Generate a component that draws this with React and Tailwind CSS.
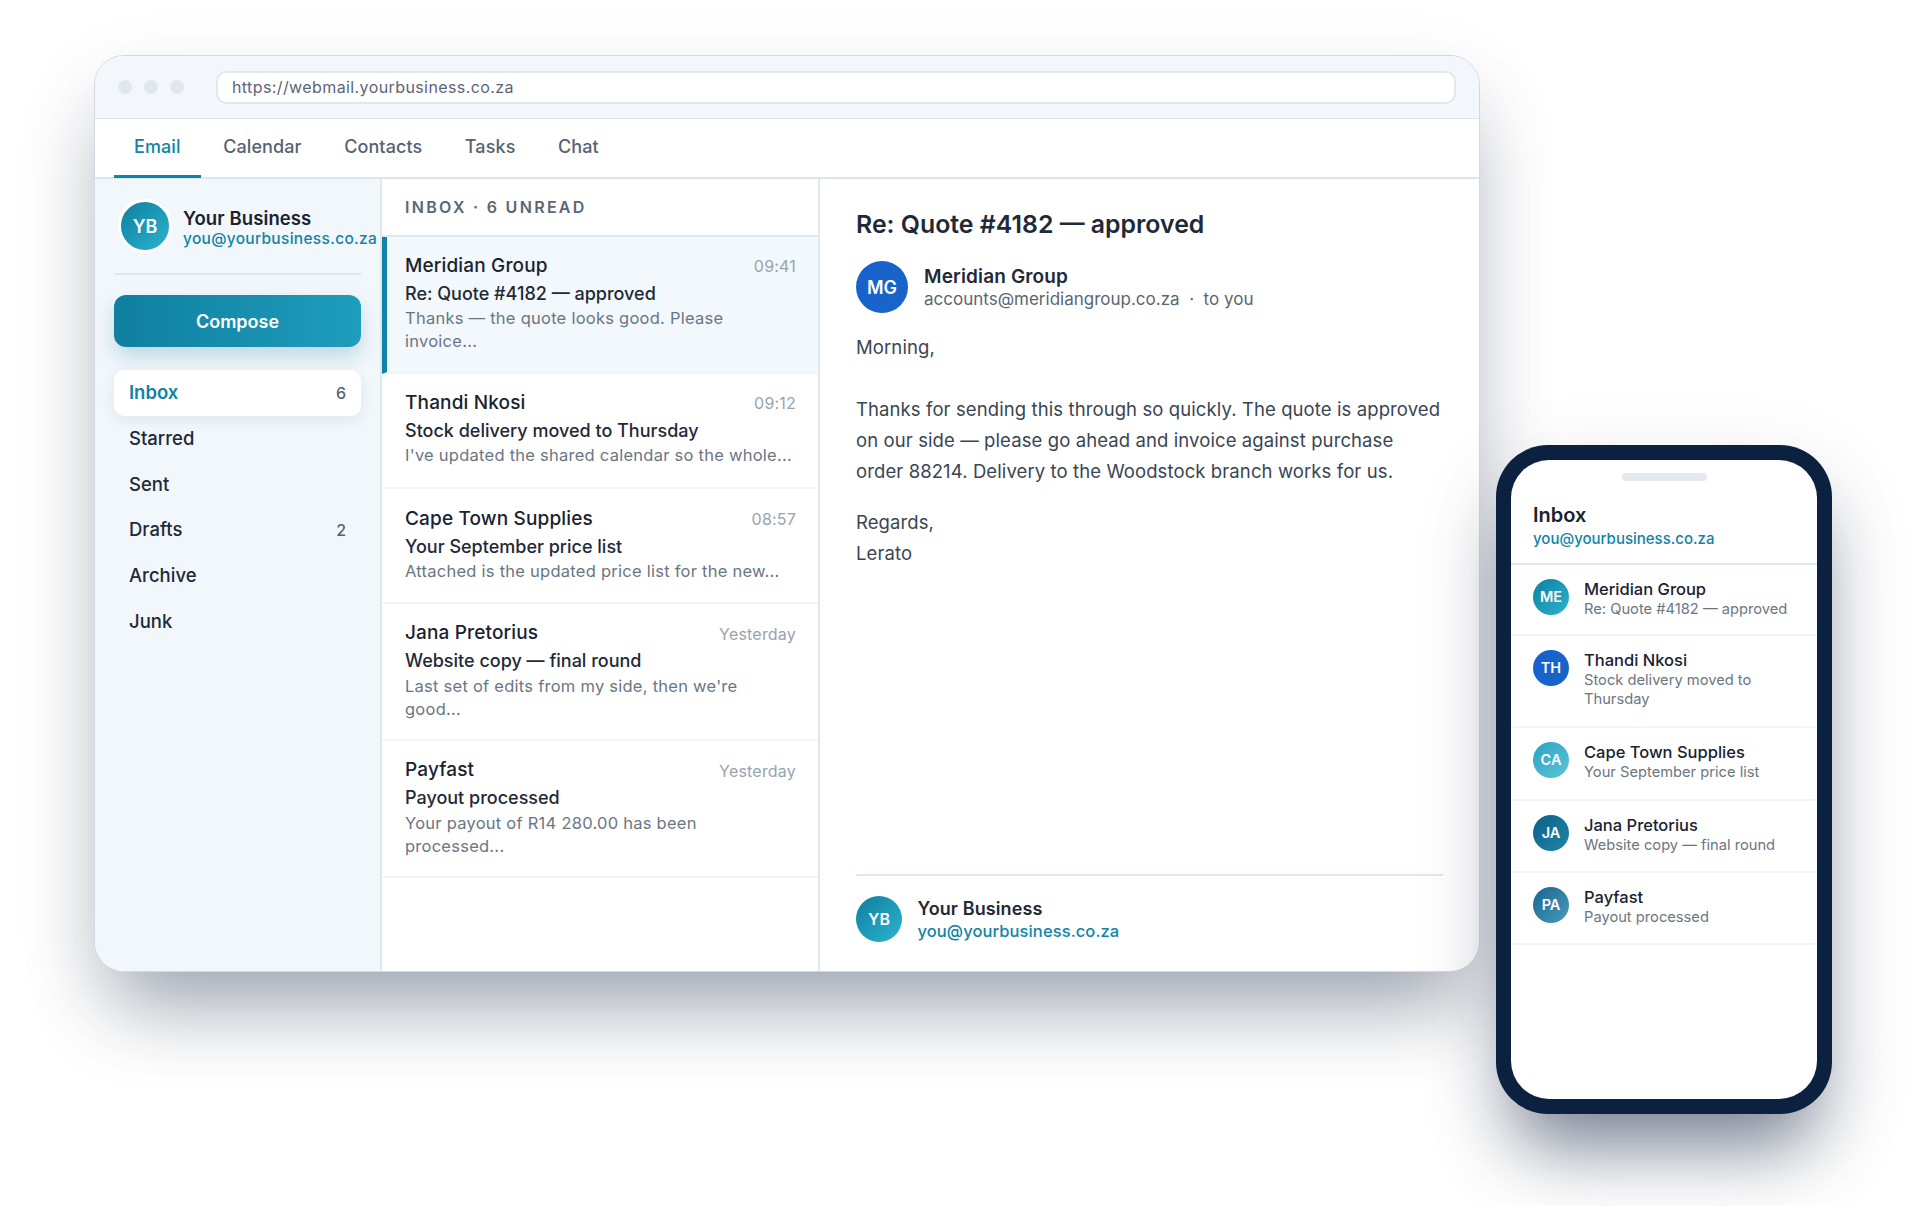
import React from "react";

const tabs = ["Email", "Calendar", "Contacts", "Tasks", "Chat"];
const nav = [["Inbox", "6"], ["Starred"], ["Sent"], ["Drafts", "2"], ["Archive"], ["Junk"]];
const mails = [
  { n: "Meridian Group", t: "09:41", s: "Re: Quote #4182 — approved", p: "Thanks — the quote looks good. Please invoice...", h: "h-[136.5px] pt-[14.5px]", active: true },
  { n: "Thandi Nkosi", t: "09:12", s: "Stock delivery moved to Thursday", p: "I've updated the shared calendar so the whole...", h: "h-[115.5px] pt-[15px]" },
  { n: "Cape Town Supplies", t: "08:57", s: "Your September price list", p: "Attached is the updated price list for the new...", h: "h-[115px] pt-[15.5px]" },
  { n: "Jana Pretorius", t: "Yesterday", s: "Website copy — final round", p: "Last set of edits from my side, then we're good...", h: "h-[137px] pt-[15px]" },
  { n: "Payfast", t: "Yesterday", s: "Payout processed", p: "Your payout of R14 280.00 has been processed...", h: "h-[137px] pt-[15px]" },
];
const phone = [
  { i: "ME", n: "Meridian Group", s: "Re: Quote #4182 — approved", c: "bg-gradient-to-br from-[#0f7f9f] to-[#2bb4d0]", h: "h-[71px]" },
  { i: "TH", n: "Thandi Nkosi", s: "Stock delivery moved to Thursday", c: "bg-gradient-to-br from-[#1a5fcf] to-[#1766c6]", h: "h-[92px]" },
  { i: "CA", n: "Cape Town Supplies", s: "Your September price list", c: "bg-gradient-to-br from-[#26a3c4] to-[#5cc4d6]", h: "h-[73px]" },
  { i: "JA", n: "Jana Pretorius", s: "Website copy — final round", c: "bg-gradient-to-br from-[#0f5f88] to-[#1f86a6]", h: "h-[72px]" },
  { i: "PA", n: "Payfast", s: "Payout processed", c: "bg-gradient-to-br from-[#17668f] to-[#4a9bbb]", h: "h-[72px]" },
];

function Avatar({ label, size, c, text }) {
  return (
    <div className={`${size} ${c} ${text} shrink-0 rounded-full flex items-center justify-center font-semibold text-white`}>
      {label}
    </div>
  );
}

export default function App() {
  return (
    <div className="w-[1920px] h-[1206px] overflow-hidden bg-white font-['Inter',sans-serif] flex items-start pl-[94px] pt-[55px]">
      {/* browser window */}
      <div className="w-[1386px] h-[917px] shrink-0 flex flex-col rounded-[30px] border border-[#cfd8e3] bg-white overflow-hidden shadow-[0_50px_80px_-20px_rgba(15,30,60,0.36),0_30px_90px_rgba(15,30,60,0.09)]">
        <div className="h-[63px] shrink-0 bg-[#f3f7fb] border-b border-[#dbe5ef] flex items-center pl-[23px] pr-[23px]">
          <div className="flex gap-[12px]">
            <span className="w-[14px] h-[14px] rounded-full bg-[#e1e7ee]" />
            <span className="w-[14px] h-[14px] rounded-full bg-[#e1e7ee]" />
            <span className="w-[14px] h-[14px] rounded-full bg-[#e1e7ee]" />
          </div>
          <div className="ml-[32px] flex-1 h-[33px] rounded-[10px] bg-white border-2 border-[#dfe8f1] flex items-center px-[14px] text-[16px] text-[#5a6675] tracking-[0.4px]">
            https://webmail.yourbusiness.co.za
          </div>
        </div>
        <div className="h-[60px] shrink-0 border-b-2 border-[#dbe5ef] flex pl-[19px] gap-[2.5px]">
          {tabs.map((t, i) => (
            <div key={t} className={`h-[59px] px-[20px] flex items-center text-[18px] tracking-[0.1px] font-medium -mb-px pb-[1px] border-b-[3px] ${i === 0 ? "text-[#0f84a6] border-[#0f84a6]" : "text-[#566270] border-transparent"}`}>
              {t}
            </div>
          ))}
        </div>
        <div className="flex-1 flex min-h-0">
          {/* sidebar */}
          <div className="w-[287px] shrink-0 bg-[#f2f7fb] border-r-2 border-[#dfe8f1] px-[19px] pt-[20px]">
            <div className="flex items-center pl-[4px] pb-[20px] border-b-2 border-[#dfe8f1] whitespace-nowrap">
              <Avatar label="YB" size="w-[54px] h-[54px] border-[3px] border-white" c="bg-gradient-to-br from-[#0f7f9f] to-[#2bb4d0]" text="text-[18px]" />
              <div className="ml-[11px] pt-[4px]">
                <div className="text-[18.5px] leading-[22px] tracking-[0.1px] font-semibold text-[#1a2230]">Your Business</div>
                <div className="text-[15.5px] leading-[20px] font-medium tracking-[0.3px] text-[#0f84a6]">you@yourbusiness.co.za</div>
              </div>
            </div>
            <div className="mt-[20px] h-[52px] rounded-[12px] bg-gradient-to-r from-[#0f7f9f] to-[#1f9dbd] text-white text-[18px] font-semibold flex items-center justify-center shadow-[0_10px_20px_rgba(15,110,150,0.22)]">
              Compose
            </div>
            <div className="mt-[23px] flex flex-col">
              {nav.map(([l, b], i) => (
                <div key={l} className={`h-[45.8px] px-[15px] flex items-center justify-between rounded-[10px] text-[18.5px] ${i === 0 ? "bg-white text-[#0f84a6] font-semibold shadow-[0_4px_14px_rgba(15,30,60,0.08)]" : "text-[#1f2937] font-medium"}`}>
                  <span>{l}</span>
                  {b && <span className="text-[16px] font-medium text-[#566270]">{b}</span>}
                </div>
              ))}
            </div>
          </div>
          {/* list */}
          <div className="w-[438px] shrink-0 border-r-2 border-[#dfe8f1] flex flex-col">
            <div className="h-[58px] shrink-0 border-b-2 border-[#dfe8f1] flex items-center pl-[23px] text-[16px] font-semibold tracking-[2.3px] text-[#5a6675]">
              INBOX · 6 UNREAD
            </div>
            {mails.map((m) => (
              <div key={m.n} className={`${m.h} shrink-0 border-b-2 border-[#f0f5f9] pr-[22px] ${m.active ? "bg-[#f2f8fc] border-l-[5px] border-l-[#0f84a6] pl-[18px]" : "pl-[23px]"}`}>
                <div className="flex justify-between items-center h-[29px]">
                  <span className="text-[19px] tracking-[0.15px] font-medium text-[#1a2230]">{m.n}</span>
                  <span className="text-[16px] tracking-[0.2px] text-[#98a3af]">{m.t}</span>
                </div>
                <div className="text-[18px] leading-[26.5px] text-[#1f2937] font-medium">{m.s}</div>
                <div className="text-[16.5px] leading-[23px] tracking-[0.25px] text-[#6b7683]">{m.p}</div>
              </div>
            ))}
          </div>
          {/* reading */}
          <div className="flex-1 flex flex-col px-[36px] pt-[27px] pb-[29px]">
            <div className="text-[24.85px] leading-[36px] font-semibold text-[#1f2937]">Re: Quote #4182 — approved</div>
            <div className="mt-[19px] flex items-center">
              <Avatar label="MG" size="w-[52px] h-[52px]" c="bg-gradient-to-br from-[#1a5fcf] to-[#1766c6]" text="text-[18px]" />
              <div className="ml-[16px] pt-[1px]">
                <div className="text-[19px] leading-[22px] tracking-[0.15px] font-semibold text-[#1f2937]">Meridian Group</div>
                <div className="text-[17px] leading-[22px] text-[#5a6675]">accounts@meridiangroup.co.za&nbsp; ·&nbsp; to you</div>
              </div>
            </div>
            <div className="mt-[19px] text-[18.5px] leading-[31px] tracking-[0.1px] text-[#3a4553]">
              <p>Morning,</p>
              <p className="mt-[31px]">Thanks for sending this through so quickly. The quote is approved<br />on our side — please go ahead and invoice against purchase<br />order 88214. Delivery to the Woodstock branch works for us.</p>
              <p className="mt-[20px]">Regards,<br />Lerato</p>
            </div>
            <div className="mt-auto border-t-2 border-[#dfe8f1] pt-[20px] flex items-center">
              <Avatar label="YB" size="w-[46px] h-[46px]" c="bg-gradient-to-br from-[#0f7f9f] to-[#2bb4d0]" text="text-[16px]" />
              <div className="ml-[15.5px] pt-[1px]">
                <div className="text-[18px] leading-[22px] tracking-[0.1px] font-semibold text-[#1f2937]">Your Business</div>
                <div className="text-[16.5px] leading-[22px] tracking-[0.1px] font-medium text-[#0f84a6]">you@yourbusiness.co.za</div>
              </div>
            </div>
          </div>
        </div>
      </div>
      {/* phone */}
      <div className="ml-[16px] mt-[390px] w-[336px] h-[669px] shrink-0 rounded-[52px] bg-[#0c2040] p-[15px] shadow-[0_50px_70px_-20px_rgba(15,30,60,0.5),0_30px_90px_rgba(15,30,60,0.12)]">
        <div className="w-full h-full rounded-[38px] bg-white overflow-hidden flex flex-col">
          <div className="w-[85px] h-[8px] rounded-full bg-[#e3e9ef] self-center mt-[13px] shrink-0" />
          <div className="h-[84px] shrink-0 border-b-2 border-[#dfe8f1] pl-[22px] pt-[20px]">
            <div className="text-[20px] leading-[28px] font-semibold text-[#1a2230]">Inbox</div>
            <div className="text-[15px] leading-[20px] font-medium text-[#0f84a6]">you@yourbusiness.co.za</div>
          </div>
          {phone.map((r) => (
            <div key={r.i} className={`${r.h} shrink-0 border-b-2 border-[#f0f5f9] flex pl-[22px] pr-[20px] pt-[14px]`}>
              <Avatar label={r.i} size="w-[36px] h-[36px]" c={r.c} text="text-[14.5px]" />
              <div className="ml-[15px]">
                <div className="text-[16.5px] leading-[20px] font-medium text-[#1a2230]">{r.n}</div>
                <div className="mt-[1px] text-[14.7px] leading-[19px] text-[#6b7683]">{r.s}</div>
              </div>
            </div>
          ))}
        </div>
      </div>
    </div>
  );
}
